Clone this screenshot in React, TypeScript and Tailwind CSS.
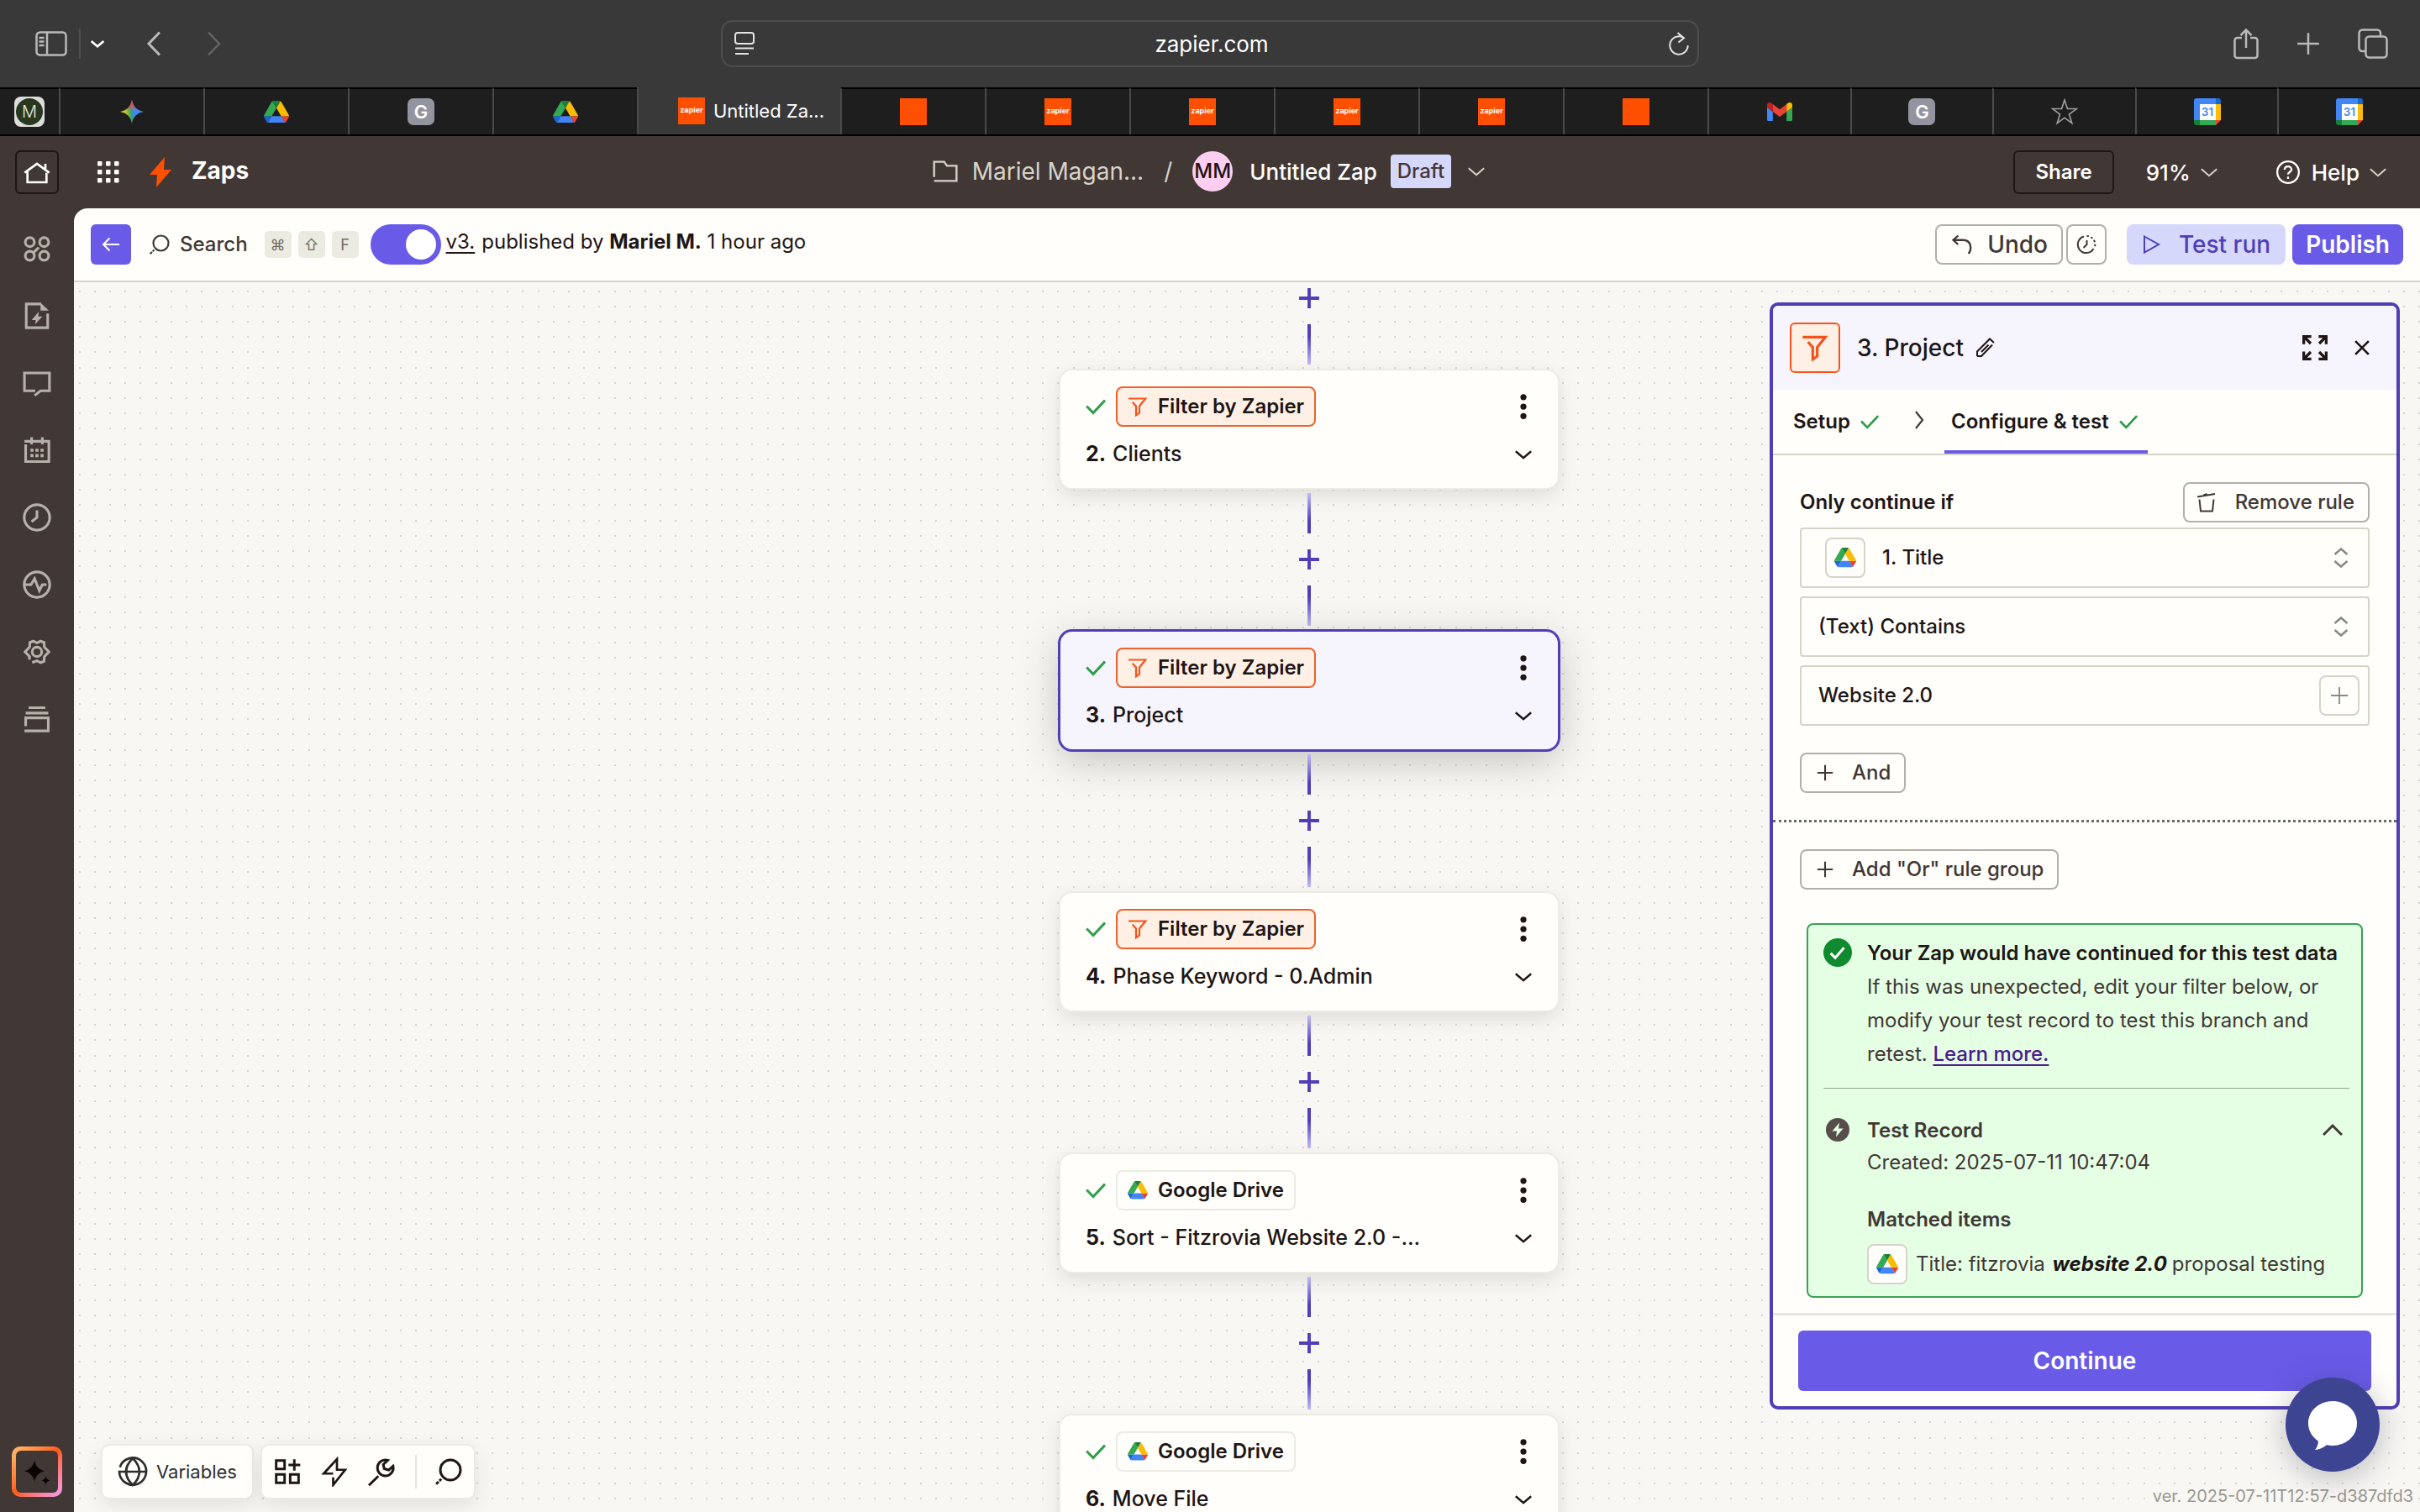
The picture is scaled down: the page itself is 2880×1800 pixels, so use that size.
import type { ReactNode } from "react";

type IconProps = { className?: string; w?: number; children?: ReactNode };

function Icon({ className = "size-8", w = 2, children }: IconProps) {
    return (
        <svg
            viewBox="0 0 24 24"
            fill="none"
            stroke="currentColor"
            strokeWidth={w}
            className={`shrink-0 ${className}`}
            aria-hidden="true"
        >
            {children}
        </svg>
    );
}

const ChevronDown = ({ className = "size-5", w = 2.4 }: IconProps) => (
    <Icon className={className} w={w}>
        <path d="M1 7.5l11 9.5 11-9.5" />
    </Icon>
);

const Check = ({ className = "size-6" }: IconProps) => (
    <Icon className={`text-[#2f9e4c] ${className}`} w={3}>
        <path d="M1.2 11.5l7.8 8L23 4.5" />
    </Icon>
);

const Plus = ({ className = "size-6", w = 2 }: IconProps) => (
    <Icon className={className} w={w}>
        <path d="M12 1v22M1 12h22" />
    </Icon>
);

const Funnel = ({ className = "size-6", w = 2.2 }: IconProps) => (
    <Icon className={`text-[#f4541b] ${className}`} w={w}>
        <path d="M1 2.5h20.3l-7.3 9v8l-4 2.8V11.5L5.8 6.8" />
    </Icon>
);

const SearchIcon = ({ className = "size-6" }: IconProps) => (
    <Icon className={className} w={2.2}>
        <circle cx="13.5" cy="10.5" r="9" />
        <path d="M5.4 18.6l-1.7 1.6M3 21l-2.2 2.1" />
    </Icon>
);

const Drive = ({ className = "w-6" }: IconProps) => (
    <svg viewBox="0 0 87.3 78" className={`shrink-0 ${className}`} aria-hidden="true">
        <path fill="#1967d2" d="M6.6 66.85l3.85 6.65c.8 1.4 1.95 2.5 3.3 3.3L27.5 53H0c0 1.55.4 3.1 1.2 4.5z" />
        <path fill="#34a853" d="M43.65 25L29.9 1.2c-1.35.8-2.5 1.9-3.3 3.3l-25.4 44A9.06 9.06 0 0 0 0 53h27.5z" />
        <path fill="#ea4335" d="M73.55 76.8c1.35-.8 2.5-1.9 3.3-3.3l1.6-2.75L86.1 57.5c.8-1.4 1.2-2.95 1.2-4.5H59.8l5.85 11.5z" />
        <path fill="#188038" d="M43.65 25L57.4 1.2C56.05.4 54.5 0 52.9 0H34.4c-1.6 0-3.15.45-4.5 1.2z" />
        <path fill="#4285f4" d="M59.8 53H27.5L13.75 76.8c1.35.8 2.9 1.2 4.5 1.2h50.8c1.6 0 3.15-.45 4.5-1.2z" />
        <path fill="#fbbc04" d="M73.4 26.5l-12.7-22c-.8-1.4-1.95-2.5-3.3-3.3L43.65 25 59.8 53h27.45c0-1.55-.4-3.1-1.2-4.5z" />
    </svg>
);

const Calendar = () => (
    <svg viewBox="0 0 32 32" className="size-8" aria-hidden="true">
        <path fill="#4285f4" d="M3 0h23v7H7v19H0V3a3 3 0 0 1 3-3z" />
        <path fill="#1967d2" d="M26 0h3a3 3 0 0 1 3 3v4h-6z" />
        <path fill="#fbbc04" d="M26 7h6v19h-6z" />
        <path fill="#34a853" d="M7 26h19v6H7z" />
        <path fill="#188038" d="M0 26h7v6H3a3 3 0 0 1-3-3z" />
        <path fill="#ea4335" d="M26 26h6l-6 6z" />
        <path fill="#fff" d="M7 7h19v19H7z" />
        <text x="16" y="21" textAnchor="middle" fontSize="13" fontWeight="600" fill="#4285f4">
            31
        </text>
    </svg>
);

const Gmail = () => (
    <svg viewBox="52 42 88 66" className="w-[30px]" aria-hidden="true">
        <path fill="#4285f4" d="M58 108h14V74L52 59v43c0 3.32 2.69 6 6 6" />
        <path fill="#34a853" d="M120 108h14c3.32 0 6-2.69 6-6V59l-20 15" />
        <path fill="#fbbc04" d="M120 48v26l20-15v-8c0-7.42-8.47-11.65-14.4-7.2" />
        <path fill="#ea4335" d="M72 74V48l24 18 24-18v26L96 92" />
        <path fill="#c5221f" d="M52 51v8l20 15V48l-5.6-4.2c-5.94-4.45-14.4-.22-14.4 7.2" />
    </svg>
);

const Gemini = () => (
    <svg viewBox="0 0 28 28" className="size-7" aria-hidden="true">
        <defs>
            <linearGradient id="gem" x1="2" y1="14" x2="26" y2="12" gradientUnits="userSpaceOnUse">
                <stop offset="0" stopColor="#f9c80e" />
                <stop offset=".2" stopColor="#c0c030" />
                <stop offset=".45" stopColor="#34a56b" />
                <stop offset=".62" stopColor="#4285f4" />
                <stop offset="1" stopColor="#3a8cff" />
            </linearGradient>
            <linearGradient id="gemTop" x1="14" y1="0" x2="14" y2="13" gradientUnits="userSpaceOnUse">
                <stop offset=".35" stopColor="#f24b4b" />
                <stop offset="1" stopColor="#f24b4b" stopOpacity="0" />
            </linearGradient>
        </defs>
        <path fill="url(#gem)" d="M14 0c1.2 7.6 6.4 12.8 14 14-7.6 1.2-12.8 6.4-14 14-1.2-7.6-6.4-12.8-14-14C7.6 12.8 12.8 7.6 14 0z" />
        <path fill="url(#gemTop)" d="M14 0c1.2 7.6 6.4 12.8 14 14H0C7.6 12.8 12.8 7.6 14 0z" />
    </svg>
);

const GTile = () => (
    <span className="flex size-8 items-center justify-center rounded-[7px] bg-[#9494a0] text-[22px] font-semibold text-white">
        G
    </span>
);

const OrangeTile = ({ label }: { label?: string }) => (
    <span className="flex size-8 shrink-0 items-center justify-center bg-[#ff4f00] pb-0.5 text-[9px] font-bold text-white">
        {label}
    </span>
);

const StarIcon = () => (
    <Icon className="size-8 text-[#a0a0a0]" w={1.2}>
        <path d="M12 1.5l2.6 7.9h8.1l-6.6 4.9 2.5 8-6.6-4.9-6.6 4.9 2.5-8-6.6-4.9h8.1z" />
    </Icon>
);

const Tab = ({ fluid, children }: { fluid?: boolean; children: ReactNode }) => (
    <a
        href="#"
        className={`flex items-center justify-center border-t-2 border-l-2 border-t-black border-l-[#4a4a4a] bg-[#1e1e1e] ${
            fluid ? "flex-1" : "w-[172px]"
        }`}
    >
        {children}
    </a>
);

function BrowserBar() {
    return (
        <header className="bg-[#393939]">
            <div className="grid h-[104px] grid-cols-[1fr_1164px_1fr] items-center text-[#b9b9b9]">
                <div className="flex items-center pl-[42px]">
                    <button aria-label="Sidebar">
                        <svg viewBox="0 0 38 30" className="w-[38px]" fill="none" stroke="currentColor" strokeWidth="2.5">
                            <rect x="1.5" y="1.5" width="35" height="27" rx="4" />
                            <path d="M14 1.5v27M4.5 8h6M4.5 12.5h6M4.5 17h6" />
                        </svg>
                    </button>
                    <span className="ml-3.5 h-9 w-0.5 bg-[#505050]" />
                    <button aria-label="Tab groups" className="ml-3 text-white">
                        <ChevronDown className="size-4" w={4} />
                    </button>
                    <button aria-label="Back" className="ml-[50px]">
                        <svg viewBox="0 0 18 30" className="h-[30px]" fill="none" stroke="currentColor" strokeWidth="3">
                            <path d="M16 1.5L3 15l13 13.5" />
                        </svg>
                    </button>
                    <button aria-label="Forward" className="ml-[54px] text-[#646464]">
                        <svg viewBox="0 0 18 30" className="h-[30px]" fill="none" stroke="currentColor" strokeWidth="2.5">
                            <path d="M2 1.5L15 15 2 28.5" />
                        </svg>
                    </button>
                </div>
                <div className="flex h-14 items-center justify-between rounded-[14px] border-2 border-[#4d4d4d] pr-2.5 pl-3.5 text-white">
                    <svg viewBox="0 0 24 28" className="w-6" fill="none" stroke="#e4e4e4" strokeWidth="2">
                        <rect x="1" y="1" width="22" height="13" rx="3" />
                        <path d="M1 19.5h22M1 26h16" />
                    </svg>
                    <span className="text-[26px]">zapier.com</span>
                    <button aria-label="Reload">
                        <svg viewBox="0 0 24 28" className="w-6" fill="none" stroke="#e4e4e4" strokeWidth="2">
                            <path d="M17.5 6.8a10.7 10.7 0 1 0 5.2 9.2M10.5 1l7.5 6.3-6.5 5.2" />
                        </svg>
                    </button>
                </div>
                <div className="flex items-center justify-end gap-[45px] pr-[38px]">
                    <button aria-label="Share page">
                        <svg viewBox="0 0 30 38" className="w-[30px]" fill="none" stroke="currentColor" strokeWidth="2.5">
                            <path d="M10 12H4.5A3 3 0 0 0 1.5 15v18a3 3 0 0 0 3 3h21a3 3 0 0 0 3-3V15a3 3 0 0 0-3-3H20M15 24V2.5M8.5 9L15 2.5 21.5 9" />
                        </svg>
                    </button>
                    <button aria-label="New tab">
                        <Plus className="size-7" w={2.2} />
                    </button>
                    <button aria-label="Tab overview">
                        <svg viewBox="0 0 36 36" className="w-9" fill="none" stroke="currentColor" strokeWidth="2.5">
                            <rect x="9.5" y="9.5" width="25" height="25" rx="4" />
                            <path d="M9 27H5.5a4 4 0 0 1-4-4V5.5a4 4 0 0 1 4-4H23a4 4 0 0 1 4 4V9" />
                        </svg>
                    </button>
                </div>
            </div>
            <nav className="flex h-[58px] border-b-2 border-black">
                <a href="#" className="flex w-[70px] items-center justify-center border-t-2 border-t-black bg-[#1e1e1e]">
                    <span className="flex size-9 items-center justify-center rounded-lg bg-[#dcdedc]">
                        <span className="flex size-8 items-center justify-center rounded-full bg-[#29371f] text-[20px] font-light text-[#e6ead8]">
                            M
                        </span>
                    </span>
                </a>
                <Tab><Gemini /></Tab>
                <Tab><Drive className="w-[30px]" /></Tab>
                <Tab><GTile /></Tab>
                <Tab><Drive className="w-[30px]" /></Tab>
                <a href="#" className="flex w-[242px] items-center justify-center gap-2.5 border-l-2 border-[#4a4a4a] pl-7 text-[22px] text-white">
                    <OrangeTile label="zapier" />
                    Untitled Za...
                </a>
                <Tab><OrangeTile /></Tab>
                <Tab><OrangeTile label="zapier" /></Tab>
                <Tab><OrangeTile label="zapier" /></Tab>
                <Tab><OrangeTile label="zapier" /></Tab>
                <Tab><OrangeTile label="zapier" /></Tab>
                <Tab><OrangeTile /></Tab>
                <Tab fluid><Gmail /></Tab>
                <Tab fluid><GTile /></Tab>
                <Tab fluid><StarIcon /></Tab>
                <Tab fluid><Calendar /></Tab>
                <Tab fluid><Calendar /></Tab>
            </nav>
        </header>
    );
}

function AppHeader() {
    return (
        <header className="grid h-[86px] grid-cols-[1fr_auto_1fr] items-center text-[26px] text-[#fffefb]">
            <div className="flex items-center pl-[18px]">
                <button aria-label="Home" className="flex size-[52px] items-center justify-center rounded-md border-2 border-[#201515]">
                    <Icon className="size-8">
                        <path d="M1 12.5l11-8 11 8M19.5 4.500v4.500M3.500 11.500V21h17v-8.500" />
                    </Icon>
                </button>
                <button aria-label="Apps" className="ml-[46px]">
                    <svg viewBox="0 0 26 26" className="size-[26px]" fill="currentColor">
                        {[0, 10, 20].map((y) =>
                            [0, 10, 20].map((x) => <rect key={`${x}-${y}`} x={x} y={y} width="5.5" height="5.5" rx="1" />),
                        )}
                    </svg>
                </button>
                <svg viewBox="0 0 26 36" className="ml-9 h-9 text-[#ff4f00]" fill="currentColor">
                    <path d="M18 0L0 21h9L8 36l18-21H17z" />
                </svg>
                <strong className="ml-6 pb-1 text-[28px] font-bold">Zaps</strong>
            </div>
            <div className="flex items-center pr-1 pb-0.5">
                <Icon className="size-8 text-[#d7d3c9]" w={1.8}>
                    <path d="M2 20.5h20V7h-8.5L11 3.5H2V17" />
                </Icon>
                <a href="#" className="ml-4 text-[28px] text-[#d7d3c9]">Mariel Magan...</a>
                <span className="ml-6 text-[28px] text-[#d7d3c9]">/</span>
                <span className="ml-6 flex size-12 items-center justify-center rounded-full bg-[#fccff0] text-[24px] font-medium text-[#201515]">
                    MM
                </span>
                <span className="ml-5 font-medium">Untitled Zap</span>
                <span className="ml-4 flex h-10 items-center rounded-sm bg-[#d5d7fb] px-2 text-[24px] font-medium text-[#413735]">
                    Draft
                </span>
                <button aria-label="Zap options" className="ml-5 text-[#d7d3c9]">
                    <ChevronDown />
                </button>
            </div>
            <div className="flex items-center justify-end pr-10">
                <button className="h-[52px] rounded-md border-2 border-[#201515] px-6 text-[24px] font-semibold">Share</button>
                <button className="ml-[38px] flex items-center gap-3 font-medium">
                    91% <ChevronDown className="size-5 text-[#d7d3c9]" />
                </button>
                <button className="ml-[70px] flex items-center font-medium">
                    <Icon className="mr-3.5 size-7">
                        <circle cx="12" cy="12" r="11" />
                        <path d="M8.5 9.5C8.5 5 15.5 5 15.5 9.3c0 2.500-3.500 2.500-3.500 5M12 16.5v2.3" />
                    </Icon>
                    Help
                    <ChevronDown className="ml-3 size-5 text-[#d7d3c9]" />
                </button>
            </div>
        </header>
    );
}

const sideIcons = [
    {
        label: "Assets",
        art: (
            <>
                <circle cx="6" cy="6.5" r="3.8" />
                <circle cx="18" cy="6.5" r="3.8" />
                <circle cx="6" cy="18" r="3.8" />
                <circle cx="18" cy="18" r="3.8" />
                <path d="M9 15.5l4.5-4.5" />
            </>
        ),
    },
    {
        label: "Zap details",
        art: (
            <>
                <path d="M21 10v12H3V2h12.5" />
                <path d="M15 1l7 6.500h-7zM13.500 8.500l-6 7H11L10.500 19l6-6.500H13z" fill="currentColor" stroke="none" />
            </>
        ),
    },
    { label: "Notes", art: <path d="M10.5 18.5h-9v-15h21v15H15l-5 4" /> },
    {
        label: "Zap history",
        art: (
            <>
                <path d="M1.5 4.5H22v17H2.5V7M7.5 1v6M16.5 1v6" />
                <path d="M6.5 12h2.600M10.700 12h2.600M15 12h2.600M6.500 16.500h2.600M10.700 16.500h2.600M15 16.500h2.600" strokeWidth="2.5" />
            </>
        ),
    },
    {
        label: "Versions",
        art: (
            <>
                <circle cx="12" cy="12" r="10.7" />
                <path d="M12 6v6l-4.5 3.5" />
            </>
        ),
    },
    {
        label: "Status",
        art: (
            <>
                <circle cx="12" cy="12" r="10.7" />
                <path d="M2 12h5l3-5 4 10 2.500-5H20" />
            </>
        ),
    },
    {
        label: "Settings",
        art: (
            <>
                <circle cx="12" cy="12" r="4" />
                <path d="M5.5 18.5l.3-2.5L2 12l3.800-4 .3-4L9 3l3 1.500L15 3l2.900 1 .3 4 3.800 4-3.800 4-.3 4-2.900 1-3-1.500L8 21" />
            </>
        ),
    },
    { label: "Zap runs", art: <path d="M5 2.5h14M2.5 7h19M2.5 18v-7h19v11h-20" /> },
];

function Sidebar() {
    return (
        <nav className="flex w-[88px] shrink-0 flex-col items-center pt-2 pb-[18px] text-[#b5b1aa]">
            {sideIcons.map((item) => (
                <button key={item.label} aria-label={item.label} className="flex h-20 items-center">
                    <Icon className="size-[34px]" w={2.2}>{item.art}</Icon>
                </button>
            ))}
            <button
                aria-label="Copilot"
                className="mt-auto size-[60px] rounded-[10px] bg-linear-135 from-[#ffbf6e] via-[#ff5a10] to-[#f59bf5] p-[5px]"
            >
                <span className="flex size-full items-center justify-center rounded-md bg-[#413735] text-[#0a0505]">
                    <Icon className="size-9" w={0}>
                        <path
                            fill="currentColor"
                            d="M10 3c.8 4.5 3.5 7.2 8 8.5-4.5 1.2-7.2 4-8 8.5-.8-4.5-3.5-7.3-8-8.5C6.500 10.200 9.200 7.500 10 3zM19 15.500c.4 1.900 1.300 2.900 3.200 3.500-1.900.5-2.800 1.500-3.200 3.500-.4-2-1.300-3-3.200-3.500 1.900-.6 2.800-1.600 3.200-3.500z"
                        />
                    </Icon>
                </span>
            </button>
        </nav>
    );
}

function Toolbar() {
    return (
        <div className="flex h-[88px] items-center justify-between border-b-2 border-[#d7d3c9] bg-[#fffefb] px-5">
            <div className="flex items-center">
                <button aria-label="Back to Zaps" className="flex size-12 items-center justify-center rounded-md bg-[#695be8] text-white">
                    <Icon className="size-6">
                        <path d="M22 12H4M10.5 4.5L3 12l7.5 7.5" />
                    </Icon>
                </button>
                <button className="ml-[22px] flex items-center gap-3 text-[24px] font-medium text-[#413735]">
                    <SearchIcon className="size-6" />
                    Search
                </button>
                <span className="ml-5 flex gap-2 text-[18px] text-[#6f6b66]">
                    {["⌘", "⇧", "F"].map((key) => (
                        <kbd key={key} className="flex size-8 items-center justify-center rounded-[5px] bg-[#ecebe1] font-['Inter','DejaVu_Sans',sans-serif]">
                            {key}
                        </kbd>
                    ))}
                </span>
                <label className="ml-3.5 flex h-12 w-[84px] cursor-pointer items-center justify-end rounded-full bg-[#695be8] p-1.5">
                    <input type="checkbox" defaultChecked aria-label="Publish state" className="sr-only" />
                    <span className="size-9 rounded-full bg-white" />
                </label>
                <p className="ml-1.5 pb-1.5 text-[24px] text-[#201515]">
                    <a href="#" className="mr-2 underline underline-offset-4">v3.</a>
                    published by <strong className="font-bold">Mariel M.</strong> 1 hour ago
                </p>
            </div>
            <div className="flex items-center text-[28px]">
                <button className="flex h-12 items-center gap-4 rounded-lg border-2 border-[#b3b0aa] px-4 font-medium text-[#413735]">
                    <Icon className="size-7">
                        <path d="M8 3L3 7.5 8 12M3 7.5h10c9 0 9 10 5.5 14" />
                    </Icon>
                    Undo
                </button>
                <button aria-label="Edit history" className="ml-1 flex size-12 items-center justify-center rounded-lg border-2 border-[#b3b0aa] text-[#413735]">
                    <Icon className="size-6">
                        <path d="M9 2.5A10 10 0 1 0 20.5 17" />
                        <path d="M12.5 2a10 10 0 0 1 9 14" strokeDasharray="2.5 2.5" />
                        <path d="M12.5 7v5l-4 4" />
                    </Icon>
                </button>
                <button className="ml-6 flex h-12 items-center gap-5 rounded-lg bg-[#d5d7fb] px-[18px] font-medium text-[#503eb7]">
                    <Icon className="size-6">
                        <path d="M3 2.500l17 9.500-17 9.500z" />
                    </Icon>
                    Test run
                </button>
                <button className="ml-2 h-12 rounded-lg bg-[#695be8] px-4 font-semibold text-white">Publish</button>
            </div>
        </div>
    );
}

type Step = { n: number; title: string; app: "filter" | "drive"; selected?: boolean };

const steps: Step[] = [
    { n: 2, title: "Clients", app: "filter" },
    { n: 3, title: "Project", app: "filter", selected: true },
    { n: 4, title: "Phase Keyword - 0.Admin", app: "filter" },
    { n: 5, title: "Sort - Fitzrovia Website 2.0 -...", app: "drive" },
    { n: 6, title: "Move File", app: "drive" },
];

const AddStep = () => (
    <button aria-label="Add step" className="flex w-12 items-center justify-center bg-[#f8f7f4] text-[#503eb7]">
        <Plus className="size-[26px]" w={3.6} />
    </button>
);

function StepCard({ step }: { step: Step }) {
    const look = step.selected
        ? "bg-[#f6f4fd] ring-[3px] ring-[#503eb7] shadow-[0_12px_48px_rgba(60,50,40,0.28)]"
        : "bg-[#fffefb] ring-2 ring-[#ecebe4] shadow-[0_8px_24px_rgba(60,50,40,0.14)]";
    return (
        <article className={`flex h-[140px] w-full shrink-0 flex-col gap-[15px] rounded-[14px] pt-[19px] pr-[26px] pl-[30px] ${look}`}>
            <div className="flex h-12 items-center gap-3">
                <Check className="size-6" />
                {step.app === "filter" ? (
                    <span className="flex h-12 items-center gap-3 rounded-lg border-2 border-[#f0602c] bg-[#fff0e6] px-3 text-[24px] font-semibold text-[#201515]">
                        <Funnel className="size-6" />
                        Filter by Zapier
                    </span>
                ) : (
                    <span className="flex h-12 items-center gap-3 rounded-lg border-2 border-[#ecebe4] px-3 text-[24px] font-semibold text-[#201515]">
                        <Drive className="w-6" />
                        Google Drive
                    </span>
                )}
                <button aria-label="Step menu" className="ml-auto text-[#201515]">
                    <Icon className="size-[30px]" w={0}>
                        <g fill="currentColor">
                            <circle cx="12" cy="3" r="2.900" />
                            <circle cx="12" cy="12" r="2.900" />
                            <circle cx="12" cy="21" r="2.900" />
                        </g>
                    </Icon>
                </button>
            </div>
            <div className="flex h-9 items-center justify-between text-[25px] text-[#201515]">
                <h2 className="font-medium">
                    <strong className="mr-2 font-bold">{step.n}.</strong>
                    {step.title}
                </h2>
                <button aria-label="Expand step" className="mr-[5px]">
                    <ChevronDown w={3} />
                </button>
            </div>
        </article>
    );
}

const dots = [0, 18, 36, 54, 72]
    .flatMap((y) => [0, 18, 36, 54, 72].map((x) => `M${x + 6} ${y + 10}h2v2h-2z`))
    .join("");

function Canvas() {
    return (
        <section className="relative flex min-h-0 flex-1 items-start justify-end overflow-hidden bg-[#f8f7f4] pr-6">
            <svg className="absolute inset-0 size-full" aria-hidden="true">
                <pattern id="dots" width="91" height="91" patternUnits="userSpaceOnUse">
                    <path d={dots} fill="#d6d4ce" />
                </pattern>
                <rect width="100%" height="100%" fill="url(#dots)" />
            </svg>
            <div className="relative mr-[252px] flex w-[592px] flex-col items-center pt-1.5">
                <AddStep />
                <span className="mt-[18px] mb-[7px] h-12 w-1 bg-linear-to-b from-[#503eb7] from-30% to-[#c3baf5]" />
                {steps.map((step) => (
                    <div key={step.n} className="flex w-full flex-col items-center">
                        <StepCard step={step} />
                        <span className="mt-1.5 mb-[18px] h-12 w-1 bg-linear-to-b from-[#c3baf5] to-[#503eb7] to-70%" />
                        <AddStep />
                        <span className="mt-[18px] mb-[7px] h-12 w-1 bg-linear-to-b from-[#503eb7] from-30% to-[#c3baf5]" />
                    </div>
                ))}
            </div>
            <Panel />

            <div className="absolute bottom-[17px] left-[34px] flex h-[62px] gap-3 text-[#201515]">
                <button className="flex items-center gap-2.5 rounded-lg bg-[#fffefb] px-[18px] text-[22px] text-[#2d2e2e] ring-2 ring-[#ecebe1] shadow-[0_8px_24px_rgba(60,50,40,0.12)]">
                    <Icon className="size-9" w={1.8}>
                        <path d="M1.8 8.5A10.7 10.7 0 1 1 1.3 12H23M12 1.3c-7 7-7 14.4 0 21.4 7-7 7-14.4 0-21.4z" />
                    </Icon>
                    Variables
                </button>
                <div className="flex items-center rounded-lg bg-[#fffefb] px-3.5 ring-2 ring-[#ecebe1] shadow-[0_8px_24px_rgba(60,50,40,0.12)]">
                    <button aria-label="Add block">
                        <Icon className="size-8" w={2.2}>
                            <path d="M2 2h7.5v7.5H2zM2 14.5h7.5V22H2zM14.5 14.5H22V22h-7.5zM18.2 1v10M13 6h10.5" />
                        </Icon>
                    </button>
                    <button aria-label="Triggers" className="ml-[22px]">
                        <Icon className="size-9" w={1.8}>
                            <path d="M11 13.5H3.5L14 2v8.500h6.500L11 22.500v-6" />
                        </Icon>
                    </button>
                    <button aria-label="Tools" className="ml-5">
                        <Icon className="size-9">
                            <path d="M17 3a6.3 6.3 0 1 0 4.2 4.5l-3.400 3.200-3.600-1-.8-3.400zM9.500 15.500L2 22.800" />
                        </Icon>
                    </button>
                    <span className="mx-[22px] h-10 w-0.5 bg-[#e6e4dc]" />
                    <button aria-label="Find step">
                        <SearchIcon className="size-8" />
                    </button>
                </div>
            </div>

            <p className="absolute right-2 bottom-1 text-[20px] whitespace-nowrap text-[#9a9792]">ver. 2025-07-11T12:57-d387dfd3</p>
            <button
                aria-label="Open chat"
                className="absolute right-12 bottom-12 flex size-28 items-center justify-center rounded-full bg-[#3d4592] shadow-[0_6px_36px_rgba(40,40,60,0.3)]"
            >
                <svg viewBox="0 0 60 60" className="size-[60px]" fill="#fff">
                    <path d="M30 2c16 0 29 11.500 29 26.500S46 55 30 55c-2.500 0-5-.3-7.200-.8C19 57.500 14 59.500 9 60c3-3.500 4-7 3.800-10.500C5.500 44.500 1 37 1 28.500 1 13.500 14 2 30 2z" />
                </svg>
            </button>
        </section>
    );
}

const Sorter = () => (
    <Icon className="pointer-events-none mr-5 size-6 text-[#8c8984]" w={2.6}>
        <path d="M4.5 8L12 1.5 19.5 8M4.5 16l7.5 6.5 7.5-6.5" />
    </Icon>
);

const outlineBtn = "flex h-12 items-center gap-[22px] rounded-lg border-2 border-[#b3b0aa] pr-4 pl-[18px] font-medium text-[#413735]";
const field = "flex h-[72px] items-center rounded border-2 border-[#d7d3c9] text-[#201515]";

function Panel() {
    return (
        <aside className="relative mt-6 flex w-[750px] shrink-0 flex-col overflow-hidden rounded-[10px] border-4 border-[#503eb7] bg-[#fffefb] text-[24px] text-[#201515]">
            <header className="flex h-[100px] items-center bg-[#f6f4fd] px-5">
                <span className="flex size-[60px] items-center justify-center rounded-md border-2 border-[#f4541b] bg-[#fff0e6]">
                    <Funnel className="size-8" w={2.4} />
                </span>
                <h2 className="ml-5 text-[28px] font-medium">3. Project</h2>
                <button aria-label="Rename step" className="ml-3.5">
                    <Icon className="size-6">
                        <path d="M2 22v-5.500L17 1.500l5 4.500M20 8.500L7 22H2M7 17L15.500 8.500" />
                    </Icon>
                </button>
                <button aria-label="Expand panel" className="ml-auto">
                    <Icon className="size-[30px]" w={2.6}>
                        <path d="M1.3 8.5V1.3h7.2M15.5 1.3h7.2v7.2M22.7 15.5v7.2h-7.2M8.5 22.7H1.3v-7.2M2 2l6 6M22 2l-6 6M22 22l-6-6M2 22l6-6" />
                    </Icon>
                </button>
                <button aria-label="Close panel" className="mr-3 ml-8">
                    <Icon className="size-[18px]" w={3.6}>
                        <path d="M1.5 1.5l21 21M22.5 1.5l-21 21" />
                    </Icon>
                </button>
            </header>
            <nav className="flex h-[78px] border-b-2 border-[#d7d3c9] pl-6 font-semibold">
                <button className="flex items-center gap-3">
                    Setup <Check className="size-[22px]" />
                </button>
                <Icon className="mt-6 mr-[18px] ml-9 size-6 text-[#413735]" w={2.2}>
                    <path d="M8 2l8 10-8 10" />
                </Icon>
                <button className="flex items-center gap-3 border-b-4 border-[#695be8] pt-1 pr-3 pl-2">
                    Configure &amp; test <Check className="size-[22px]" />
                </button>
            </nav>

            <div className="px-8 pt-8">
                <div className="mb-1.5 flex items-center justify-between">
                    <strong className="font-semibold">Only continue if</strong>
                    <button className={outlineBtn}>
                        <Icon className="-ml-1 size-6">
                            <path d="M1 5.5L22 2M8.5 3.5l4-1.5M3.5 8.5L5 22.5h14l1.500-14" />
                        </Icon>
                        Remove rule
                    </button>
                </div>
                <div className="flex flex-col gap-2.5 font-medium">
                    <div className={field}>
                        <span className="ml-7 flex size-12 items-center justify-center rounded-lg border-2 border-[#d7d3c9]">
                            <Drive className="w-[26px]" />
                        </span>
                        <select aria-label="Field" className="ml-5 flex-1 appearance-none bg-transparent">
                            <option>1. Title</option>
                        </select>
                        <Sorter />
                    </div>
                    <div className={field}>
                        <select aria-label="Condition" className="ml-5 flex-1 appearance-none bg-transparent">
                            <option>(Text) Contains</option>
                        </select>
                        <Sorter />
                    </div>
                    <div className={field}>
                        <input aria-label="Value" defaultValue="Website 2.0" className="ml-5 min-w-0 flex-1 bg-transparent outline-none" />
                        <button aria-label="Insert data" className="mr-2.5 flex size-12 items-center justify-center rounded-lg border-2 border-[#d7d3c9] text-[#8c8984]">
                            <Plus className="size-[22px]" />
                        </button>
                    </div>
                </div>
                <button className={`mt-8 ${outlineBtn}`}>
                    <Plus className="size-5" w={2.4} />
                    And
                </button>
            </div>
            <hr className="my-8 border-t-[3px] border-dotted border-[#6b6763]" />
            <div className="px-8">
                <button className={outlineBtn}>
                    <Plus className="size-5" w={2.4} />
                    Add "Or" rule group
                </button>
                <div className="mx-2 mt-10 rounded-lg border-2 border-[#3aa255] bg-[#e5ffe5] pt-3.5 pr-3.5 pb-3.5 pl-[18px] text-[#413735]">
                    <div className="flex gap-[18px]">
                        <span className="mt-0.5 flex size-[34px] shrink-0 items-center justify-center rounded-full bg-[#0f8a2e] text-white">
                            <Icon className="size-5" w={3.6}>
                                <path d="M2 13l6.5 6.5L21 5" />
                            </Icon>
                        </span>
                        <p className="leading-10">
                            <strong className="block font-semibold whitespace-nowrap text-[#201515]">
                                Your Zap would have continued for this test data
                            </strong>
                            If this was unexpected, edit your filter below, or modify your test record to test this branch and retest.{" "}
                            <a href="#" className="font-medium text-[#4b1b8c] underline underline-offset-4">Learn more.</a>
                        </p>
                    </div>
                    <hr className="mt-5 border-t border-[#8fa58c]" />
                    <div className="mt-[31px] flex items-start pl-[3px]">
                        <span className="mt-1 flex size-7 shrink-0 items-center justify-center rounded-full bg-[#574e4b] text-[#e5ffe5]">
                            <svg viewBox="0 0 20 20" className="size-5" fill="currentColor">
                                <path d="M12 1.5L3.5 11.5H9L8 18.5 16.5 8.5H11z" />
                            </svg>
                        </span>
                        <div className="ml-[21px] flex-1 leading-[38px]">
                            <h3 className="font-semibold">Test Record</h3>
                            <p>Created: 2025-07-11 10:47:04</p>
                            <h3 className="mt-[30px] font-semibold">Matched items</h3>
                            <p className="mt-2.5 flex items-center whitespace-nowrap">
                                <span className="mr-2.5 flex size-12 items-center justify-center rounded-lg border-2 border-[#d7d3c9] bg-[#fffefb]">
                                    <Drive className="w-[26px]" />
                                </span>
                                Title: fitzrovia&nbsp;
                                <em className="mr-1.5 ml-0.5 font-bold text-[#201515]">website 2.0</em>
                                proposal testing
                            </p>
                        </div>
                        <button aria-label="Collapse record" className="mt-1.5 mr-2 -ml-8">
                            <Icon className="size-6" w={3}>
                                <path d="M1 18L12 7l11 11" />
                            </Icon>
                        </button>
                    </div>
                </div>
            </div>
            <footer className="mt-[18px] border-t-[3px] border-[#e8e7e2] px-[30px] py-[18px]">
                <button className="h-[72px] w-full rounded-md bg-[#695be8] text-[28px] font-semibold text-white">Continue</button>
            </footer>
        </aside>
    );
}

export default function App() {
    return (
        <div className="flex h-screen flex-col overflow-hidden bg-[#413735] font-['Inter',sans-serif]">
            <BrowserBar />
            <AppHeader />
            <div className="flex min-h-0 flex-1">
                <Sidebar />
                <main className="flex min-w-0 flex-1 flex-col overflow-hidden rounded-tl-2xl">
                    <Toolbar />
                    <Canvas />
                </main>
            </div>
        </div>
    );
}
